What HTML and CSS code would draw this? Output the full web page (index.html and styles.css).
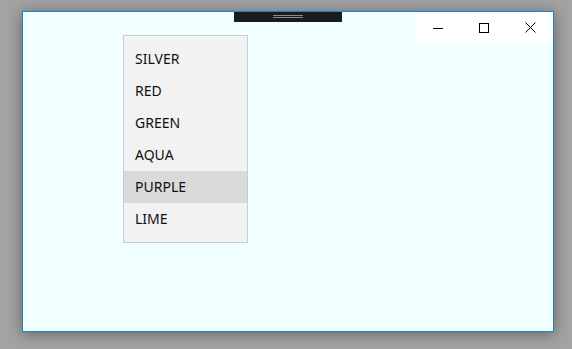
FILE: index.html
```html
<!DOCTYPE html>
<html lang="en">
<head>
    <meta charset="UTF-8">
    <title>Colors</title>
    <link rel="stylesheet" href="styles.css">
</head>
<body>
    <div class="window">
        <div class="drag-handle"><span class="grip"></span></div>
        <div class="caption">
            <div class="cap-btn">
                <svg width="10" height="10" viewBox="0 0 10 10"><path d="M0 5.5h10" stroke="#000" stroke-width="1"/></svg>
            </div>
            <div class="cap-btn">
                <svg width="10" height="10" viewBox="0 0 10 10"><rect x="0.5" y="0.5" width="9" height="9" fill="none" stroke="#000" stroke-width="1"/></svg>
            </div>
            <div class="cap-btn">
                <svg width="11" height="11" viewBox="0 0 11 11"><path d="M0.5 0.5l10 10M10.5 0.5l-10 10" stroke="#000" stroke-width="1"/></svg>
            </div>
        </div>
        <ul class="list">
            <li class="item">SILVER</li>
            <li class="item">RED</li>
            <li class="item">GREEN</li>
            <li class="item">AQUA</li>
            <li class="item selected">PURPLE</li>
            <li class="item">LIME</li>
        </ul>
    </div>
</body>
</html>
```

FILE: styles.css
```css
body {
    margin: 0;
    background: #a3a3a3;
    font-family: "Noto Sans", "Open Sans", sans-serif;
    height: 349px;
    overflow: hidden;
}
.window {
    position: relative;
    margin: 11px 0 0 22px;
    width: 530px;
    height: 319px;
    background: #f0ffff;
    border: 1px solid #1883d7;
    box-shadow: 0 2px 14px rgba(0, 0, 0, 0.4);
    overflow: hidden;
}
.drag-handle {
    position: absolute;
    top: 0;
    left: 211px;
    width: 108px;
    height: 10px;
    background: #1b1b1b;
    display: flex;
    justify-content: center;
}
.grip {
    margin-top: 3px;
    width: 30px;
    height: 1px;
    border-top: 1px solid #8a8a8a;
    border-bottom: 1px solid #8a8a8a;
}
.caption {
    position: absolute;
    top: 0;
    right: 0;
    display: flex;
    background: #fff;
}
.cap-btn {
    width: 46px;
    height: 31px;
    display: flex;
    align-items: center;
    justify-content: center;
}
.list {
    list-style: none;
    margin: 23px 0 0 100px;
    padding: 7px 0;
    width: 123px;
    background: #f2f2f2;
    border: 1px solid #cccccc;
}
.item {
    height: 32px;
    line-height: 32px;
    padding-left: 11px;
    font-size: 14px;
    color: #111;
}
.selected { background: #dadada; }
```
